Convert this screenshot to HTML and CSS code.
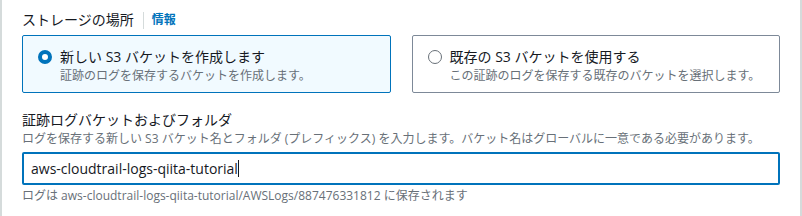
FILE: index.html
```html
<!DOCTYPE html>
<html lang="ja">
<head>
<meta charset="utf-8">
<link rel="stylesheet" href="styles.css">
</head>
<body>
<div class="panel">
  <div class="field-head">
    <span class="title">ストレージの場所</span>
    <span class="sep"></span>
    <a class="info">情報</a>
  </div>
  <div class="tiles">
    <div class="tile selected">
      <span class="radio on"></span>
      <div class="tile-text">
        <div class="tile-label">新しい S3 バケットを作成します</div>
        <div class="tile-desc">証跡のログを保存するバケットを作成します。</div>
      </div>
    </div>
    <div class="tile">
      <span class="radio"></span>
      <div class="tile-text">
        <div class="tile-label">既存の S3 バケットを使用する</div>
        <div class="tile-desc">この証跡のログを保存する既存のバケットを選択します。</div>
      </div>
    </div>
  </div>
  <div class="field">
    <div class="label">証跡ログバケットおよびフォルダ</div>
    <div class="desc">ログを保存する新しい S3 バケット名とフォルダ (プレフィックス) を入力します。バケット名はグローバルに一意である必要があります。</div>
    <div class="input"><span class="value">aws-cloudtrail-logs-qiita-tutorial</span><span class="caret"></span></div>
    <div class="hint">ログは aws-cloudtrail-logs-qiita-tutorial/AWSLogs/887476331812 に保存されます</div>
  </div>
</div>
</body>
</html>
```
FILE: styles.css
```css
html, body {
  margin: 0;
  padding: 0;
  background: #ffffff;
}
body {
  font-family: "Open Sans", "Noto Sans CJK JP", sans-serif;
  color: #16191f;
  width: 802px;
  height: 216px;
  overflow: hidden;
}
.panel {
  box-sizing: border-box;
  height: 216px;
  border-left: 2px solid #d5dbdb;
  border-right: 2px solid #d5dbdb;
  padding: 10px 20px 0 20px;
}
.field-head {
  display: flex;
  align-items: center;
  height: 20px;
}
.title {
  font-size: 14px;
  line-height: 20px;
}
.sep {
  width: 1px;
  height: 17px;
  background: #d5dbdb;
  margin: 0 8px 0 9px;
}
.info {
  font-size: 12px;
  font-weight: bold;
  color: #0073bb;
  line-height: 20px;
}
.tiles {
  display: flex;
  gap: 21px;
  margin-top: 5px;
}
.tile {
  flex: 1;
  box-sizing: border-box;
  height: 58px;
  border: 1px solid #7d8998;
  border-radius: 2px;
  display: flex;
  align-items: flex-start;
  padding: 11px 15px 0 15px;
}
.tile.selected {
  border-color: #0073bb;
  background: #f1faff;
}
.radio {
  box-sizing: border-box;
  width: 14px;
  height: 14px;
  border-radius: 50%;
  border: 1.5px solid #687078;
  background: #fff;
  margin-top: 3px;
  flex: none;
}
.radio.on {
  border: 4px solid #0073bb;
}
.tile-text {
  margin-left: 8px;
}
.tile-label {
  font-size: 14px;
  line-height: 20px;
}
.tile-desc {
  font-size: 12px;
  line-height: 17px;
  color: #687078;
}
.field {
  margin-top: 17px;
}
.label {
  font-size: 14px;
  line-height: 20px;
}
.desc {
  font-size: 12px;
  line-height: 16px;
  color: #687078;
  margin-top: 1px;
}
.input {
  box-sizing: border-box;
  height: 33px;
  margin-top: 5px;
  border: 2px solid #0073bb;
  border-radius: 2px;
  display: flex;
  align-items: center;
  padding: 0 7px;
}
.value {
  font-size: 14px;
  color: #16191f;
}
.caret {
  width: 1px;
  height: 17px;
  background: #16191f;
}
.hint {
  font-size: 12px;
  line-height: 16px;
  color: #687078;
  margin-top: 3px;
}
```
